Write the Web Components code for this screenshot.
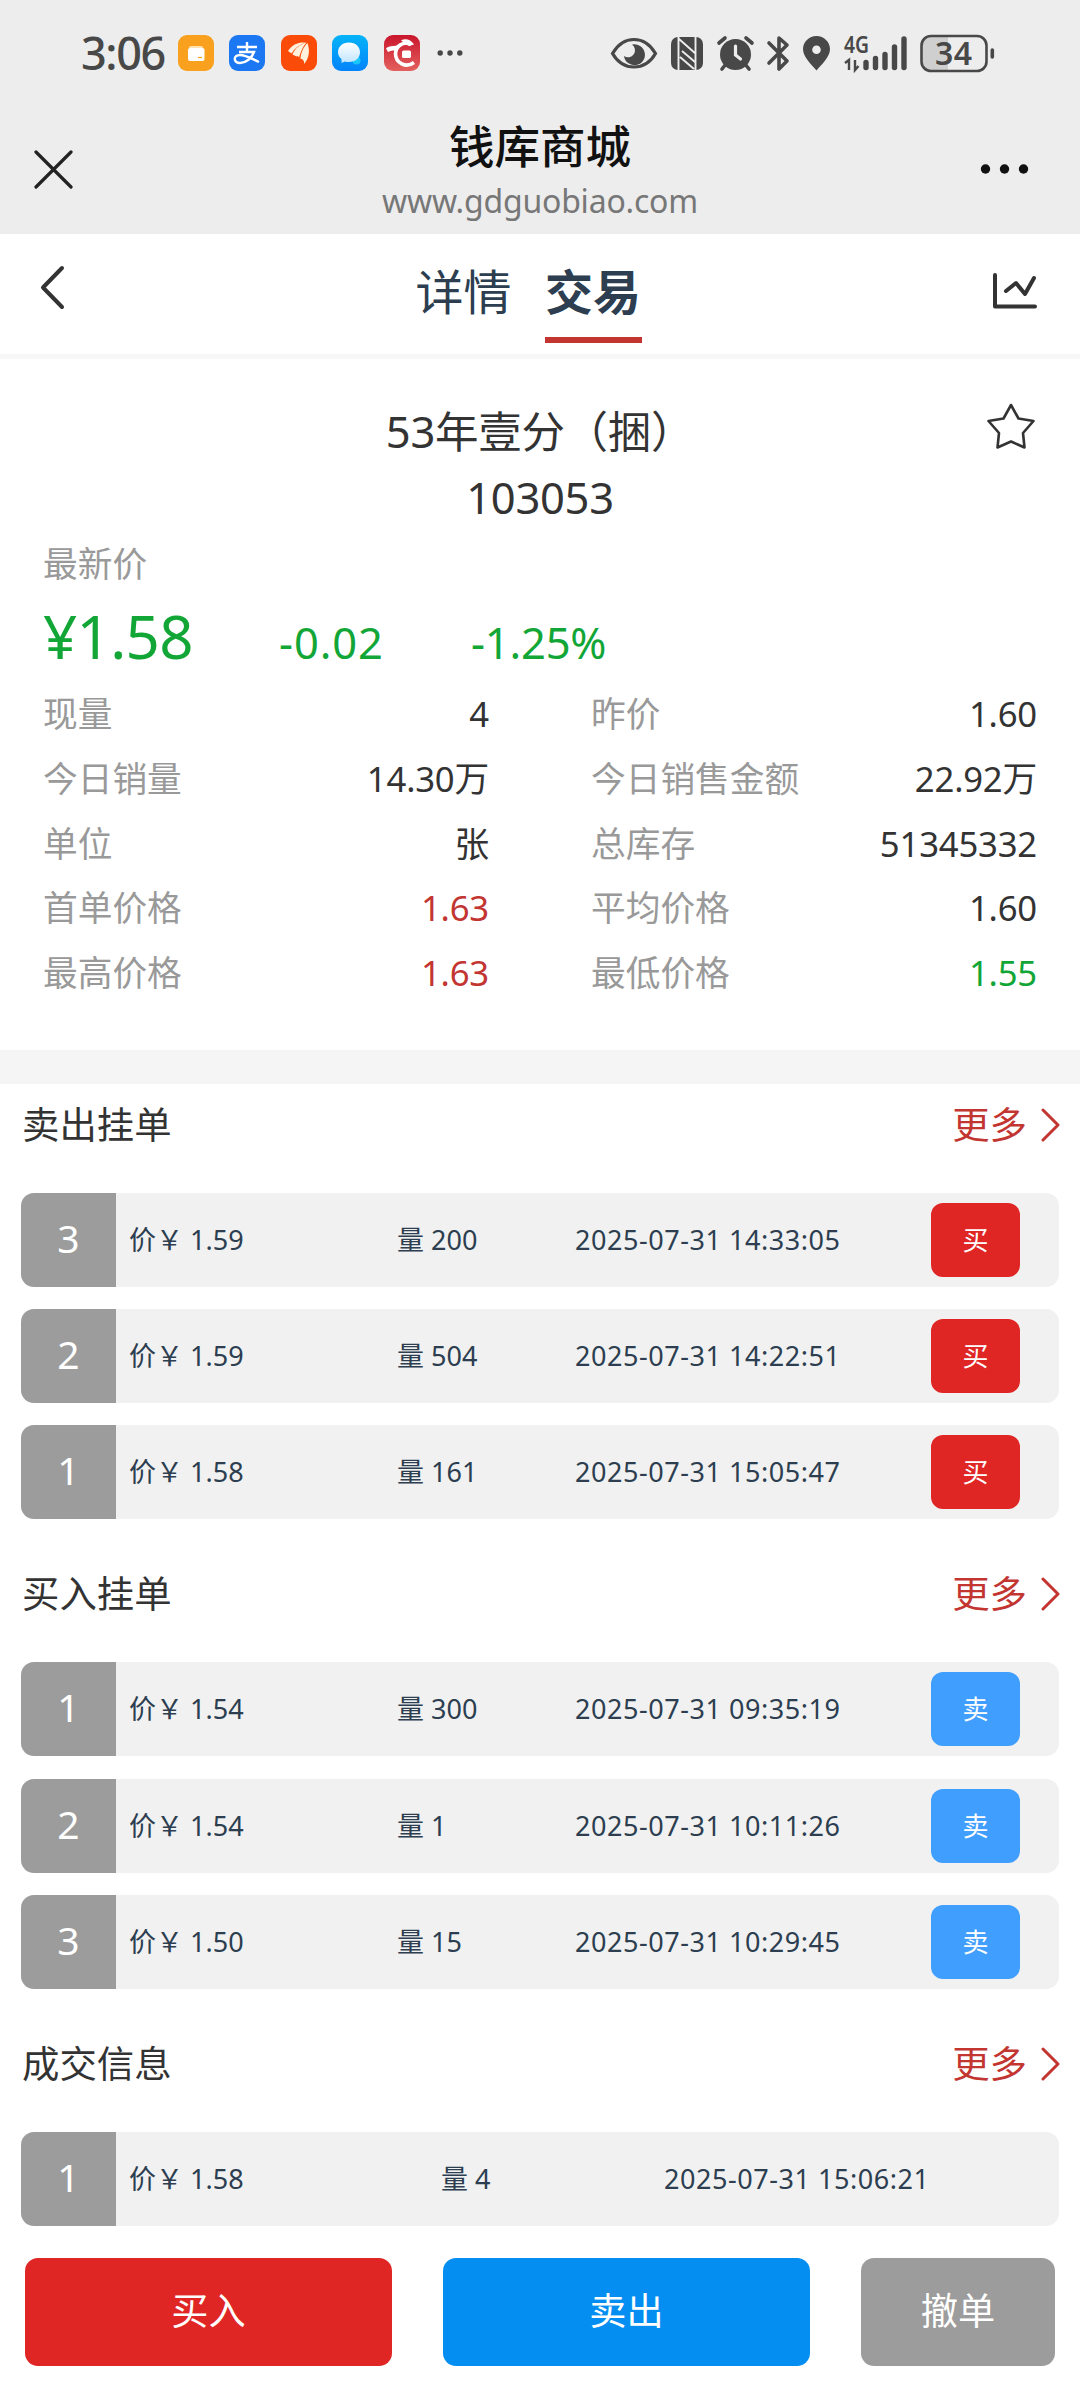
<!DOCTYPE html>
<html lang="zh-CN">
<head>
<meta charset="UTF-8">
<meta name="viewport" content="width=device-width, initial-scale=1.0">
<title>钱库商城</title>
<style>
  :root {
    --red: #e02525;
    --link-red: #c23531;
    --blue: #048ef2;
    --light-blue: #409eff;
    --green: #12a637;
    --gray: #9c9c9c;
    --navy: #2c3e50;
    --text: #333;
    --muted: #999;
  }
  * { box-sizing: border-box; }
  body { margin: 0; width: 1080px; height: 2390px; overflow: hidden; background: #fff; color: var(--text); font-family: "Noto Sans", "Noto Sans CJK SC", sans-serif; }
</style>
</head>
<body>
<trade-page></trade-page>

<script>
const define = (name, html) => {
  const template = document.createElement('template');
  template.innerHTML = html;
  customElements.define(name, class extends HTMLElement {
    constructor() {
      super();
      this.attachShadow({ mode: 'open' }).appendChild(template.content.cloneNode(true));
    }
  });
};

define('status-bar', `
  <style>
    :host { display: flex; align-items: center; justify-content: space-between; height: 106px; padding: 0 86px 0 81px; background: #ededed; color: #484848; }
    .left { display: flex; align-items: center; }
    .time { width: 97px; font-size: 45px; line-height: 60px; font-weight: 500; letter-spacing: -1.4px; }
    .apps { display: flex; gap: 15.4px; margin-right: 17px; }
    svg { display: block; flex: none; overflow: visible; }
    text { font-family: "Noto Sans", "Noto Sans CJK SC", sans-serif; }
  </style>
  <div class="left">
    <span class="time">3:06</span>
    <div class="apps">
      <svg width="36" height="36" viewBox="0 0 36 36">
        <rect width="36" height="36" rx="9" fill="#f9a11f"/>
        <path d="M11 13q0-2 2-2h10q2 0 2 2z" fill="#ffe2ae"/>
        <rect x="10" y="13" width="16.5" height="13" rx="2" fill="#fff"/>
        <path d="M20 22.5h4" stroke="#f9a11f" stroke-width="1.2"/>
      </svg>
      <svg width="36" height="36" viewBox="0 0 36 36">
        <rect width="36" height="36" rx="9" fill="#1b77f2"/>
        <g fill="none" stroke="#fff" stroke-width="2.4">
          <path d="M8 12h20M18 7v10M10 17h15c-2 6-8 11-14 11-7 0-7-8 0-8 6 0 12 4 19 7"/>
        </g>
      </svg>
      <svg width="36" height="36" viewBox="0 0 36 36">
        <rect width="36" height="36" rx="9" fill="#fb4b09"/>
        <g fill="#fff1dc">
          <path d="M7 16C11 9.500 17 7 24.500 7.500 18 10 13.500 13.500 10.500 18.500z"/>
          <path d="M11.500 19.500C14 13.500 18.500 9.500 25.500 7.500 22 11.500 20 16 18 22.500q-1-2.500-2.500-1z"/>
          <path d="M19.500 24C20 17 22.500 12 26.500 8c2.500 7 2 15-3.500 21 .5-3-1-5-3.500-5z"/>
        </g>
      </svg>
      <svg width="36" height="36" viewBox="0 0 36 36">
        <defs>
          <linearGradient id="sky" x1="0" y1="0" x2="0" y2="1"><stop stop-color="#05b4f8"/><stop offset="1" stop-color="#0483fa"/></linearGradient>
          <linearGradient id="bubble" x1="0" y1="0" x2="0" y2="1"><stop stop-color="#fff"/><stop offset="1" stop-color="#bfe5ff"/></linearGradient>
        </defs>
        <rect width="36" height="36" rx="9" fill="url(#sky)"/>
        <circle cx="24.500" cy="25.500" r="4" fill="#18c6fb"/>
        <path d="M17 7.500c6.500 0 11 4 11 9.700S23.500 27 17 27c-1.500 0-3-.2-4-.6L9.500 28v-4C7.300 22.300 6 20 6 17.200 6 11.500 10.500 7.500 17 7.500z" fill="url(#bubble)"/>
      </svg>
      <svg width="36" height="36" viewBox="0 0 36 36">
        <defs><linearGradient id="crimson" x1="0" y1="0" x2="0" y2="1"><stop stop-color="#c9152c"/><stop offset="1" stop-color="#e3615e"/></linearGradient></defs>
        <rect width="36" height="36" rx="9" fill="url(#crimson)"/>
        <path d="M27 9.500C19 6 12 11 11.500 18.500 11.500 28 22 33.500 30 27.500" fill="none" stroke="#fff" stroke-width="3.600"/>
        <path d="M2 13.500c3-3 7-2 11-3l-1 6.500c-3-3-5-1-8 0zM17 5.500c4-2.500 10-1 13 4l-5 1.500z" fill="#fff"/>
        <rect x="18" y="15.500" width="9" height="7.500" rx="1.500" fill="#fff"/>
      </svg>
    </div>
    <svg width="26" height="8" viewBox="0 0 26 8" fill="#484848"><circle cx="3.200" cy="4" r="2.700"/><circle cx="13" cy="4" r="2.700"/><circle cx="22.800" cy="4" r="2.700"/></svg>
  </div>
  <svg width="384" height="60" viewBox="610 22 384 60" fill="none" stroke="#484848">
    <path d="M612.500 52.500C618 43 626 38.500 634 38.500S650 43 655.500 52.500C650 62 642 66 634 66S618 62 612.500 52.500z" stroke-width="3.200"/>
    <path d="M632 43.500A10.500 10.500 0 1 1 624 55a7 7 0 0 0 8-11.500z" fill="#484848" stroke="none"/>
    <rect x="671" y="36" width="32" height="33" rx="7" fill="#484848" stroke="none"/>
    <path d="M678.500 69V36M695.500 36v33M679 38l17 15M682 50l13 11M680 56l14 12" stroke="#ededed" stroke-width="1.900"/>
    <circle cx="735.500" cy="53.500" r="15.500" fill="#484848" stroke="none"/>
    <path d="M719 42l6-5M752 42l-6-5M722 68l4-5M749 68l-4-5" stroke-width="3.600" stroke-linecap="round"/>
    <path d="M735.500 45v9l5 4" stroke="#ededed" stroke-width="3.200" stroke-linecap="round"/>
    <path d="M769 42l18 18-8 8V37l8 7-18 18" stroke-width="3.600" stroke-linejoin="round" stroke-linecap="round"/>
    <path d="M816.500 35C809 35 803 41 803 48c0 8 8 15 13.500 21.500C822 63 830 56 830 48c0-7-6-13-13.500-13zm0 9.500a4.300 4.300 0 1 1 0 8.600 4.300 4.300 0 0 1 0-8.600z" fill="#484848" fill-rule="evenodd" stroke="none"/>
    <text x="844" y="51.500" font-size="22.500" font-weight="600" fill="#484848" stroke="none" textLength="25" lengthAdjust="spacingAndGlyphs">4G</text>
    <path d="M845 62l4-3v10M855 59v10l3.500-4" stroke-width="2.400"/>
    <path d="M866 61.500v5M875.500 57.500v9M885 53.500v13M894.500 46v20.500M904 38v28.500" stroke-width="5.400" stroke-linecap="round"/>
    <path d="M932 35h16v34h-16q-10 0-10-10V45q0-10 10-10z" fill="#cfcfcf" stroke="none"/>
    <rect x="921.500" y="35" width="65" height="35" rx="9.500" stroke-width="2.600"/>
    <path d="M992.300 49v7" stroke-width="3.600" stroke-linecap="round"/>
    <text x="935" y="64" font-size="32" font-weight="600" fill="#484848" stroke="none" textLength="37">34</text>
  </svg>
`);

define('web-header', `
  <style>
    :host { display: grid; grid-template-columns: 120px 1fr 120px; height: 128px; background: #ededed; }
    .mid { display: flex; flex-direction: column; align-items: center; padding-top: 12px; }
    .title { font-size: 45.500px; line-height: 56px; font-weight: 500; color: #111; }
    .url { font-size: 32px; line-height: 40px; margin-top: 7px; color: #777; letter-spacing: -0.2px; }
    .close { margin: 44px 0 0 34px; }
    .more { margin: 58px 0 0 19px; }
  </style>
  <svg class="close" width="39" height="39" viewBox="0 0 39 39" stroke="#222" stroke-width="3.200" stroke-linecap="round"><path d="M2 2l35 35M37 2L2 37"/></svg>
  <div class="mid">
    <span class="title"><slot></slot></span>
    <span class="url"><slot name="url"></slot></span>
  </div>
  <svg class="more" width="52" height="10" viewBox="0 0 52 10" fill="#111"><circle cx="6.500" cy="5" r="4.700"/><circle cx="25.500" cy="5" r="4.700"/><circle cx="44.500" cy="5" r="4.700"/></svg>
`);

define('tab-bar', `
  <style>
    :host { display: flex; justify-content: space-between; height: 125px; padding: 0 42px 0 38px; border-bottom: 5px solid #f7f7f7; background: #fff; }
    .tabs { display: flex; gap: 33px; font-size: 48px; line-height: 60px; color: var(--navy); margin-right: 1px; }
    .tabs span { display: block; box-sizing: border-box; height: 109px; padding-top: 28px; }
    .tabs .active { font-weight: 700; border-bottom: 6px solid #c23531; width: 97px; text-align: center; }
    .back { margin-top: 31px; }
    .chart { margin-top: 37px; }
  </style>
  <svg class="back" width="28" height="46" viewBox="0 0 28 46" fill="none" stroke="#333" stroke-width="4" stroke-linecap="round" stroke-linejoin="round"><path d="M24 3L5 22.500 24 42"/></svg>
  <div class="tabs"><span>详情</span><span class="active">交易</span></div>
  <svg class="chart" width="46" height="38" viewBox="0 0 46 38" fill="none" stroke="#333" stroke-width="4" stroke-linecap="round" stroke-linejoin="round"><path d="M3 4v31.500h40M14 20l10-8 9 11L42 7"/></svg>
`);

define('quote-cell', `
  <style>
    :host { display: flex; justify-content: space-between; font-size: 34.700px; line-height: 64.750px; white-space: nowrap; }
    .label { color: var(--muted); }
    .value { letter-spacing: -0.2px; }
    :host([tone="up"]) .value { color: var(--link-red); }
    :host([tone="down"]) .value { color: var(--green); }
  </style>
  <span class="label"><slot name="label"></slot></span>
  <span class="value"><slot></slot></span>
`);

define('quote-panel', `
  <style>
    :host { display: block; height: 691px; padding: 40px 43px 0 43px; background: #fff; }
    .head { display: grid; grid-template-columns: 60px 1fr 60px; font-size: 43.500px; line-height: 65.500px; text-align: center; margin-bottom: 9px; }
    .head p { margin: 0; white-space: nowrap; letter-spacing: -0.3px; }
    .star { margin: 4px 0 0 10px; }
    .label { font-size: 34.700px; line-height: 50px; color: var(--muted); }
    .price { display: flex; align-items: baseline; box-sizing: border-box; height: 93px; padding-top: 5px; color: var(--green); font-size: 43.500px; line-height: 84px; letter-spacing: -0.2px; }
    .now { width: 236px; font-size: 60px; letter-spacing: -0.7px; }
    .diff { width: 192px; letter-spacing: 0.9px; }
    .grid { display: grid; grid-template-columns: 446px 446px; justify-content: space-between; }
  </style>
  <div class="head">
    <span></span>
    <div><p>53年壹分（捆）</p><p>103053</p></div>
    <svg class="star" width="48" height="46" viewBox="0 0 48 46" fill="none" stroke="#333" stroke-width="2.600" stroke-linejoin="round"><path d="M24 2l7.500 13.500 15 2.500L36 30l1.500 14.500L24 38.500l-13.500 6L12 30 1.500 18l15-2.500z"/></svg>
  </div>
  <div class="label">最新价</div>
  <div class="price"><span class="now">¥1.58</span><span class="diff">-0.02</span><span>-1.25%</span></div>
  <div class="grid"><slot></slot></div>
`);

define('order-section', `
  <style>
    :host { display: flex; flex-direction: column; gap: 22.300px; height: 469.500px; padding: 0 21px; }
    header { display: flex; justify-content: space-between; align-items: center; box-sizing: border-box; height: 86.500px; padding: 0 0 5px 1px; font-size: 37.400px; line-height: 56px; }
    .more { display: flex; align-items: center; gap: 14px; margin-right: -2px; color: var(--link-red); }
  </style>
  <header>
    <span><slot name="title"></slot></span>
    <span class="more">更多<svg width="20" height="34" viewBox="0 0 20 34" fill="none" stroke="#c23531" stroke-width="3" stroke-linecap="round" stroke-linejoin="round"><path d="M2 2l15 15L2 32"/></svg></span>
  </header>
  <slot></slot>
`);

class OrderRow extends HTMLElement {
  connectedCallback() {
    const side = this.getAttribute('side');
    const label = { buy: '买', sell: '卖' }[side];
    this.attachShadow({ mode: 'open' }).innerHTML = `
      <style>
        :host { display: grid; grid-template-columns: 108px 268px 178px 356px 89px; align-items: center; flex: none; height: 94px; border-radius: 13px; overflow: hidden; background: #f1f1f1; font-size: 27px; line-height: 40px; color: var(--navy); white-space: nowrap; }
        :host(:not([side])) { grid-template-columns: 108px 312px 223px 1fr; }
        .no { width: 95px; height: 94px; background: var(--gray); color: #fff; font-size: 39px; line-height: 90px; text-align: center; }
        .time { letter-spacing: 0.55px; }
        button { height: 74px; padding: 0; border: 0; border-radius: 12px; color: #fff; font: inherit; font-size: 26px; background: var(--red); }
        :host([side="sell"]) button { background: var(--light-blue); }
      </style>
      <span class="no">${this.getAttribute('no')}</span>
      <span class="price">价￥ ${this.getAttribute('price')}</span>
      <span>量 ${this.getAttribute('amount')}</span>
      <span class="time">${this.getAttribute('time')}</span>
      ${label ? `<button>${label}</button>` : ''}
    `;
  }
}
customElements.define('order-row', OrderRow);

define('action-bar', `
  <style>
    :host { display: grid; grid-template-columns: 367px 367px 194px; gap: 51px; height: 132px; padding: 0 25px 24px; background: #fff; }
    button { border: 0; border-radius: 13px; padding: 0 0 6px; color: #fff; font: inherit; font-size: 37.200px; background: var(--red); }
    .sell { background: var(--blue); }
    .cancel { background: var(--gray); }
  </style>
  <button>买入</button>
  <button class="sell">卖出</button>
  <button class="cancel">撤单</button>
`);

define('trade-page', `
  <style>
    :host { display: flex; flex-direction: column; height: 2390px; }
    status-bar, web-header, tab-bar, quote-panel, action-bar { flex: none; box-sizing: border-box; }
    order-section { box-sizing: border-box; }
    .orders { flex: 1; min-height: 0; overflow: hidden; border-top: 34px solid #f5f5f5; background: #fff; }
  </style>
  <status-bar></status-bar>
  <web-header>钱库商城<span slot="url">www.gdguobiao.com</span></web-header>
  <tab-bar></tab-bar>
  <quote-panel>
    <quote-cell><span slot="label">现量</span>4</quote-cell>
    <quote-cell><span slot="label">昨价</span>1.60</quote-cell>
    <quote-cell><span slot="label">今日销量</span>14.30万</quote-cell>
    <quote-cell><span slot="label">今日销售金额</span>22.92万</quote-cell>
    <quote-cell><span slot="label">单位</span>张</quote-cell>
    <quote-cell><span slot="label">总库存</span>51345332</quote-cell>
    <quote-cell tone="up"><span slot="label">首单价格</span>1.63</quote-cell>
    <quote-cell><span slot="label">平均价格</span>1.60</quote-cell>
    <quote-cell tone="up"><span slot="label">最高价格</span>1.63</quote-cell>
    <quote-cell tone="down"><span slot="label">最低价格</span>1.55</quote-cell>
  </quote-panel>
  <div class="orders">
    <order-section>
      <span slot="title">卖出挂单</span>
      <order-row side="buy" no="3" price="1.59" amount="200" time="2025-07-31 14:33:05"></order-row>
      <order-row side="buy" no="2" price="1.59" amount="504" time="2025-07-31 14:22:51"></order-row>
      <order-row side="buy" no="1" price="1.58" amount="161" time="2025-07-31 15:05:47"></order-row>
    </order-section>
    <order-section>
      <span slot="title">买入挂单</span>
      <order-row side="sell" no="1" price="1.54" amount="300" time="2025-07-31 09:35:19"></order-row>
      <order-row side="sell" no="2" price="1.54" amount="1" time="2025-07-31 10:11:26"></order-row>
      <order-row side="sell" no="3" price="1.50" amount="15" time="2025-07-31 10:29:45"></order-row>
    </order-section>
    <order-section>
      <span slot="title">成交信息</span>
      <order-row no="1" price="1.58" amount="4" time="2025-07-31 15:06:21"></order-row>
    </order-section>
  </div>
  <action-bar></action-bar>
`);
</script>
</body>
</html>
